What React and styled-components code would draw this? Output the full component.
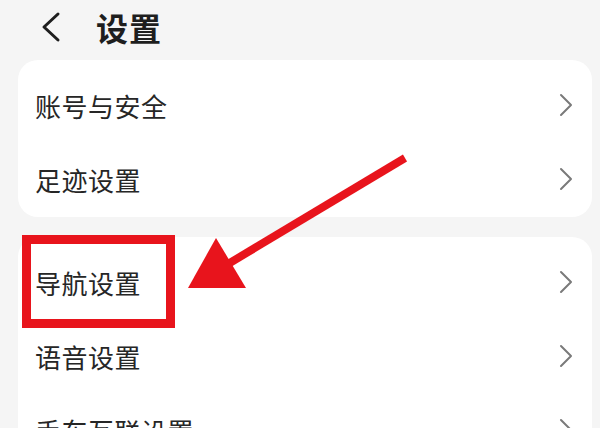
import styled, { createGlobalStyle } from 'styled-components'

const GlobalStyle = createGlobalStyle`
  html, body {
    margin: 0;
    padding: 0;
    background: #f5f5f5;
    font-family: "Noto Sans CJK SC", "Noto Sans", sans-serif;
  }
  #root {
    width: 600px;
    height: 428px;
    overflow: hidden;
  }
`

const Page = styled.div`
  position: relative;
  width: 600px;
  height: 428px;
  overflow: hidden;
  background: #f5f5f5;
`

const Header = styled.header`
  display: flex;
  align-items: center;
  height: 54px;
  padding: 0 0 0 38px;
  margin-bottom: 6px;
`

const BackButton = styled.div`
  display: flex;
  align-items: center;
  width: 30px;
  margin-right: 28px;
`

const Title = styled.h1`
  margin: 0;
  font-size: 32px;
  font-weight: 700;
  color: #1e1e1e;
  letter-spacing: 1px;
`

const Card = styled.section`
  background: #fff;
  margin: 0 8px ${p => p.gap || 0}px 18px;
  border-radius: 20px;
  padding: 8px 0 ${p => p.bottom || 0}px;
`

const Row = styled.div`
  display: flex;
  align-items: center;
  justify-content: space-between;
  height: 74px;
  padding: 0 18px 0 17px;
`

const Label = styled.span`
  font-size: 26px;
  color: #262626;
  letter-spacing: 0.5px;
`

const Overlay = styled.svg`
  position: absolute;
  left: 0;
  top: 0;
  pointer-events: none;
`

function Chevron() {
  return (
    <svg width="16" height="24" viewBox="0 0 16 24">
      <path d="M3 2 L13 12 L3 22" fill="none" stroke="#7a7a7a" strokeWidth="2" strokeLinecap="round" strokeLinejoin="round" />
    </svg>
  )
}

const groups = [
  { items: ['账号与安全', '足迹设置'], gap: 20, bottom: 1 },
  { items: ['导航设置', '语音设置', '手车互联设置'], gap: 0, bottom: 0 },
]

export default function App() {
  return (
    <Page>
      <GlobalStyle />
      <Header>
        <BackButton>
          <svg width="24" height="32" viewBox="0 0 24 32">
            <path d="M20 3 L6 16 L20 29" fill="none" stroke="#1e1e1e" strokeWidth="3" strokeLinecap="round" strokeLinejoin="round" />
          </svg>
        </BackButton>
        <Title>设置</Title>
      </Header>
      {groups.map((g, i) => (
        <Card key={i} gap={g.gap} bottom={g.bottom}>
          {g.items.map(item => (
            <Row key={item}>
              <Label>{item}</Label>
              <Chevron />
            </Row>
          ))}
        </Card>
      ))}
      <Overlay width="600" height="428" viewBox="0 0 600 428">
        <rect x="26.5" y="239.5" width="144" height="84" fill="none" stroke="#e8141c" strokeWidth="9" />
        <line x1="405" y1="158" x2="228" y2="264" stroke="#e8141c" strokeWidth="8" strokeLinecap="butt" />
        <polygon points="216,238 246,288 188,288" fill="#e8141c" />
      </Overlay>
    </Page>
  )
}
